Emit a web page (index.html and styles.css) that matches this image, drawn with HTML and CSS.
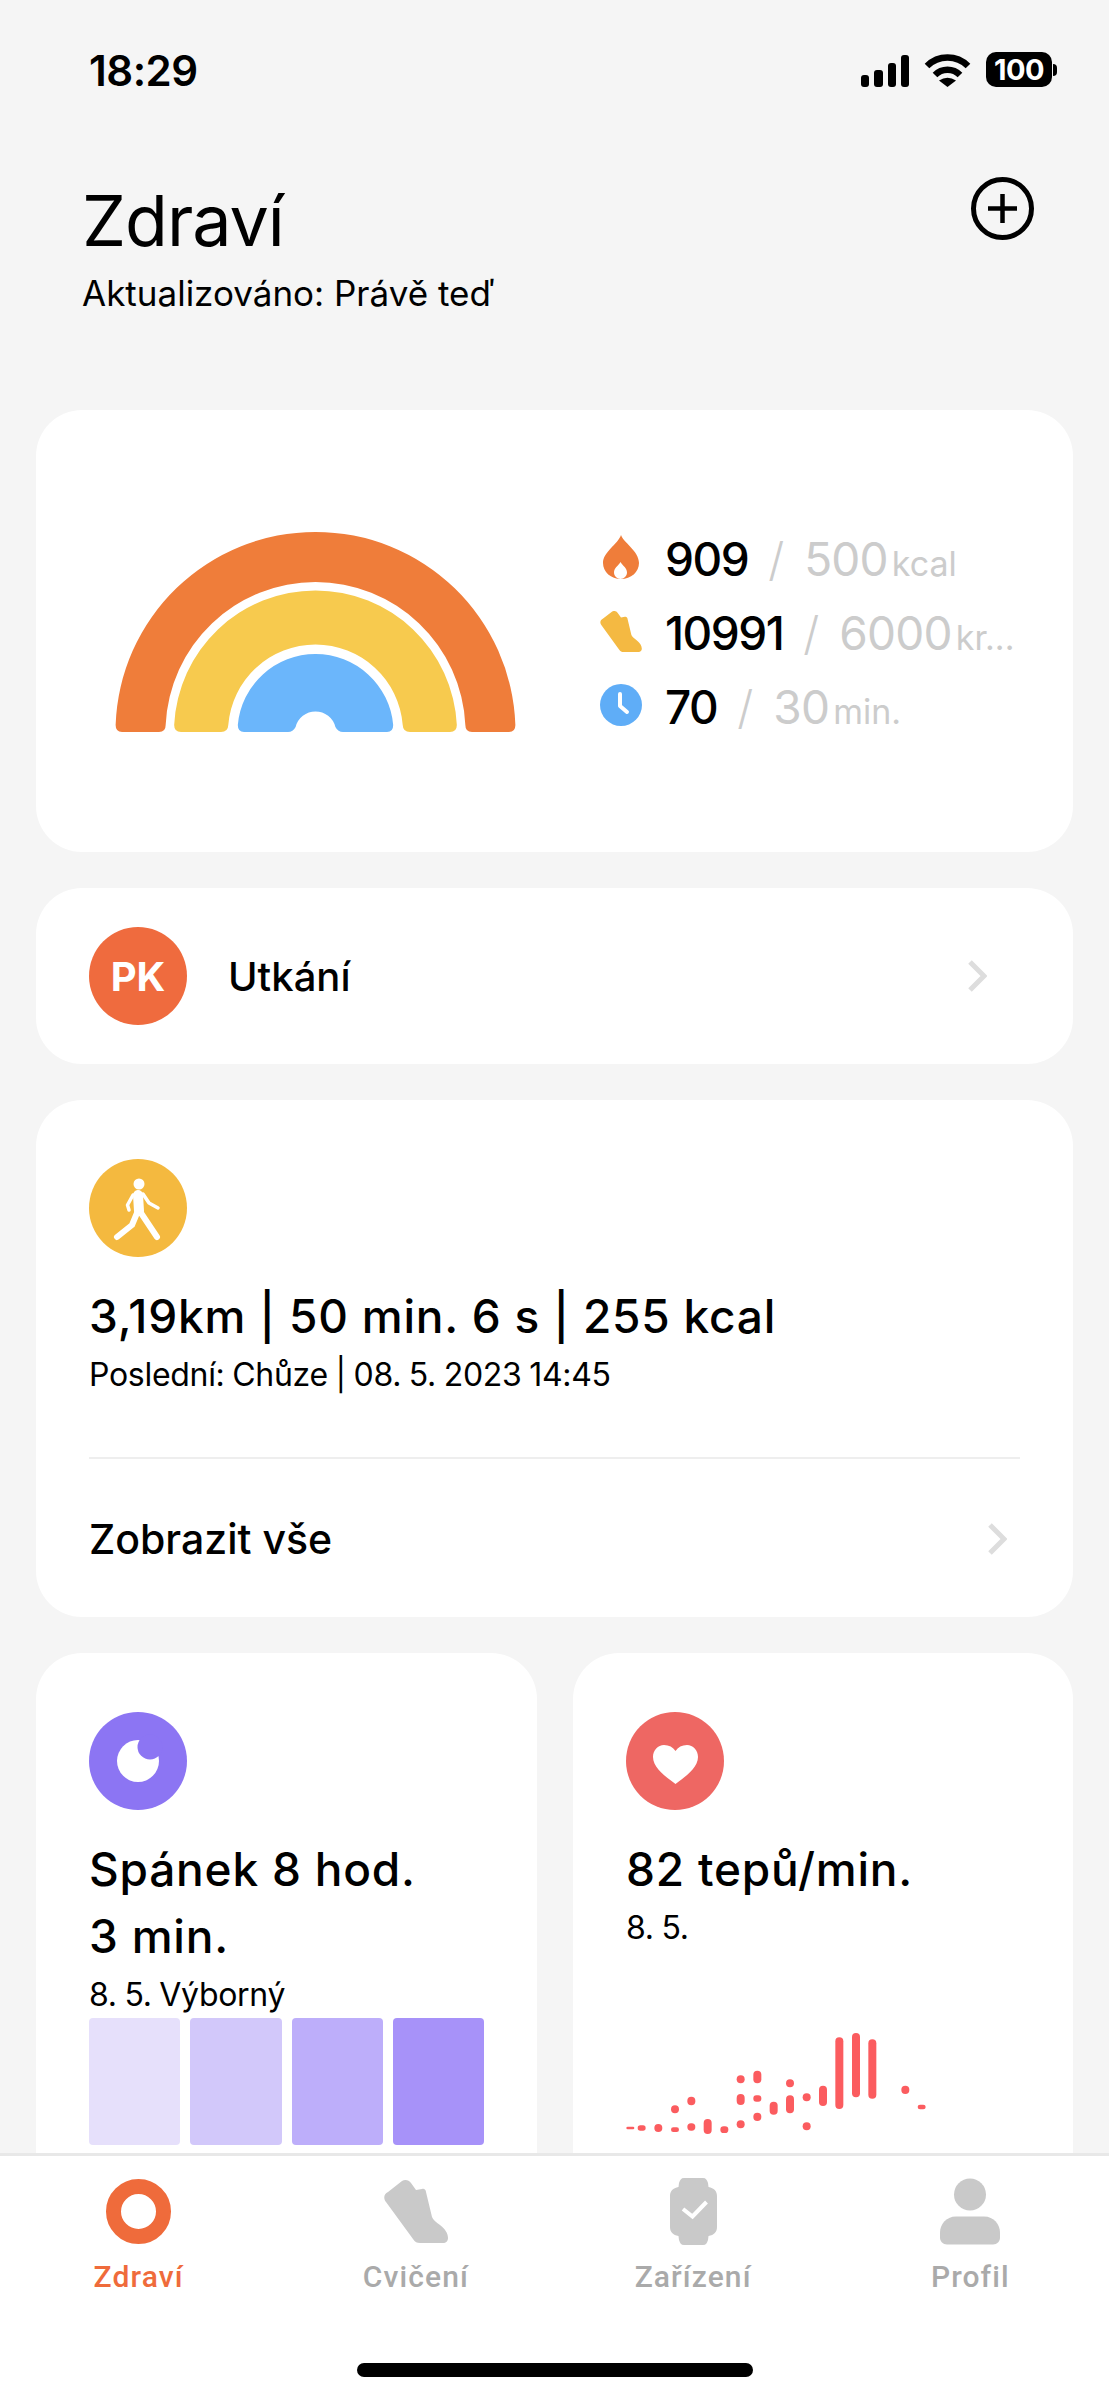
FILE: index.html
```html
<!DOCTYPE html>
<html lang="cs">
<head>
<meta charset="utf-8">
<title>Zdraví</title>
<link rel="stylesheet" href="styles.css">
</head>
<body>
<svg class="defs" width="0" height="0" aria-hidden="true">
  <symbol id="shoe" viewBox="0 0 64 63"><path d="M2 22C-1 18 0 14 4 12L18 1C21-1 25 0 27 3L32 10L38 9C40 8 42 10 42 12L48 37C49 40 52 42 56 45C61 49 64 53 64 58C64 61 62 63 59 63H36C33 63 31 62 29 59Z"/></symbol>
</svg>
<div class="app">
  <div class="status">
    <span class="time">18:29</span>
    <div class="status-icons">
      <svg class="signal" width="48" height="32" viewBox="0 0 48 32"><rect x="0" y="20" width="8" height="12" rx="3"/><rect x="13" y="15" width="9" height="17" rx="3"/><rect x="27" y="8" width="8" height="24" rx="3"/><rect x="40" y="0" width="8" height="32" rx="3"/></svg>
      <svg class="wifi" width="47" height="33" viewBox="0 0 47 33"><path class="wifi-arc" d="M3 12A29 29 0 0 1 44 12"/><path class="wifi-arc" d="M11 21A17.5 17.5 0 0 1 36 21"/><path d="M15 26.500Q23.500 21 32 26.500L23.500 33Z"/></svg>
      <div class="battery"><span class="battery-body">100</span><span class="battery-nub"></span></div>
    </div>
  </div>

  <header class="header">
    <div class="header-text">
      <h1 class="title">Zdraví</h1>
      <p class="updated">Aktualizováno: Právě teď</p>
    </div>
    <svg class="add" width="63" height="63" viewBox="0 0 63 63"><circle cx="31.500" cy="31.500" r="29" fill="none" stroke="#000" stroke-width="5"/><path d="M31.500 17V46M17 31.500H46" fill="none" stroke="#000" stroke-width="4.500"/></svg>
  </header>

  <main class="main">
    <section class="card rings">
      <svg class="rainbow" width="401" height="201" viewBox="0 0 401 201">
        <path fill="#ef7d3a" d="M0.620 194A200 200 0 0 1 400.380 194Q400.380 201 394 201H357Q350.340 201 350.340 194A150 150 0 0 0 50.660 194Q50.660 201 44 201H7Q0.620 201 0.620 194Z"/>
        <path fill="#f7ca4e" d="M59.170 194A141.500 141.500 0 0 1 341.830 194Q341.830 201 335 201H295Q288 201 287.720 194A87.500 87.500 0 0 0 113.280 194Q113 201 106 201H66Q59.170 201 59.170 194Z"/>
        <path fill="#6bb6fb" d="M122.810 194A78 78 0 0 1 278.190 194Q278.190 201 272 201H228Q223 201 220.400 196A20.500 20.500 0 0 0 180.600 196Q178 201 173 201H129Q122.810 201 122.810 194Z"/>
      </svg>
      <div class="stats">
        <div class="stat">
          <svg class="stat-icon" width="42" height="44" viewBox="0 0 42 44"><path fill="#ef7d3a" d="M21 0C23 7 39 16 39 28C39 37 31 44 21 44C11 44 3 37 3 28C3 17 18 9 21 0Z"/><path fill="#fff" d="M20.500 27C23 31 27 33 27 37.500C27 41 24 44 20.500 44C17 44 14 41 14 37.500C14 33 18 31 20.500 27Z"/></svg>
          <span class="num">909</span><span class="slash">/</span><span class="goal">500</span><span class="unit">kcal</span>
        </div>
        <div class="stat">
          <svg class="stat-icon shoe-yellow" width="42" height="41"><use href="#shoe"/></svg>
          <span class="num">10991</span><span class="slash">/</span><span class="goal">6000</span><span class="unit">kr...</span>
        </div>
        <div class="stat">
          <svg class="stat-icon" width="42" height="42" viewBox="0 0 42 42"><circle cx="21" cy="21" r="21" fill="#5fadf7"/><path d="M20 10V22L27 28" fill="none" stroke="#fff" stroke-width="4" stroke-linecap="round" stroke-linejoin="round"/></svg>
          <span class="num">70</span><span class="slash">/</span><span class="goal">30</span><span class="unit">min.</span>
        </div>
      </div>
    </section>

    <section class="card pk">
      <div class="badge badge-pk">PK</div>
      <span class="pk-label">Utkání</span>
      <svg class="chevron" width="20" height="34" viewBox="0 0 20 34"><path d="M3 3L17 17L3 31"/></svg>
    </section>

    <section class="card activity">
      <div class="badge badge-walk">
        <svg width="98" height="98" viewBox="0 0 98 98"><circle cx="50" cy="25" r="5.500" fill="#fff"/><path d="M49 36L50 52" stroke-width="10"/><path d="M44 36L38.500 46L40 51M54 35L60 44L69 49" stroke-width="3.500"/><path d="M48 54L43 66L28 78M52 54L60 66L68 78" stroke-width="6"/></svg>
      </div>
      <h2 class="metric">3,19km | 50 min. 6 s | 255 kcal</h2>
      <p class="sub">Poslední: Chůze | 08. 5. 2023 14:45</p>
      <div class="divider"></div>
      <div class="see-all">
        <span>Zobrazit vše</span>
        <svg class="chevron" width="20" height="34" viewBox="0 0 20 34"><path d="M3 3L17 17L3 31"/></svg>
      </div>
    </section>

    <div class="pair">
      <section class="card tile">
        <div class="badge badge-sleep">
          <svg width="98" height="98" viewBox="0 0 98 98"><circle cx="49" cy="49" r="21" fill="#fff"/><circle cx="61" cy="35" r="12.500" fill="#8c75f3"/></svg>
        </div>
        <h2 class="metric">Spánek 8 hod.<br>3 min.</h2>
        <p class="sub">8. 5. Výborný</p>
        <div class="sleep-bars">
          <span class="sleep-bar s1"></span><span class="sleep-bar s2"></span><span class="sleep-bar s3"></span><span class="sleep-bar s4"></span>
        </div>
      </section>
      <section class="card tile">
        <div class="badge badge-heart">
          <svg width="98" height="98" viewBox="0 0 98 98"><path fill="#fff" d="M49.500 72C40 65 27 56 27 45C27 38 32 33 38 33C43 33 47 35 49.500 39C52 35 56 33 61 33C67 33 72 38 72 45C72 56 59 65 49.500 72Z"/></svg>
        </div>
        <h2 class="metric">82 tepů/min.</h2>
        <p class="sub">8. 5.</p>
        <svg class="pulse" width="300" height="134" viewBox="78 0 900 402">
          <rect x="79" y="380" width="24" height="8" rx="4"/><rect x="113" y="376" width="24" height="16" rx="8"/><rect x="163" y="372" width="24" height="24" rx="12"/>
          <rect x="213" y="316" width="24" height="24" rx="12"/><rect x="213" y="382" width="24" height="14" rx="7"/>
          <rect x="262" y="290" width="24" height="26" rx="12"/><rect x="262" y="370" width="24" height="22" rx="11"/>
          <rect x="311" y="357" width="24" height="45" rx="12"/><rect x="361" y="379" width="24" height="20" rx="10"/>
          <rect x="410" y="226" width="24" height="24" rx="12"/><rect x="410" y="282" width="24" height="33" rx="12"/><rect x="410" y="361" width="24" height="24" rx="12"/>
          <rect x="460" y="212" width="24" height="38" rx="12"/><rect x="460" y="286" width="24" height="19" rx="9"/><rect x="460" y="338" width="24" height="25" rx="12"/>
          <rect x="509" y="305" width="24" height="39" rx="12"/>
          <rect x="558" y="238" width="24" height="24" rx="12"/><rect x="558" y="286" width="24" height="54" rx="12"/>
          <rect x="608" y="280" width="24" height="24" rx="12"/><rect x="608" y="367" width="24" height="24" rx="12"/>
          <rect x="657" y="257" width="24" height="61" rx="12"/><rect x="706" y="112" width="24" height="215" rx="12"/><rect x="756" y="99" width="24" height="193" rx="12"/><rect x="805" y="118" width="24" height="178" rx="12"/>
          <rect x="904" y="257" width="24" height="25" rx="12"/><rect x="953" y="314" width="24" height="14" rx="7"/>
        </svg>
      </section>
    </div>
  </main>

  <nav class="tabbar">
    <div class="tab tab-active">
      <svg width="65" height="65" viewBox="0 0 65 65"><circle cx="32.500" cy="32.500" r="25" fill="none" stroke="#ef6b3b" stroke-width="15"/></svg>
      <span>Zdraví</span>
    </div>
    <div class="tab">
      <svg class="tab-icon" width="64" height="65"><use href="#shoe"/></svg>
      <span>Cvičení</span>
    </div>
    <div class="tab">
      <svg class="tab-icon" width="47" height="67" viewBox="0 0 47 67"><path d="M14 0H33C36 0 37 2 38 5L38.500 9C44 10 47 13 47 18V49C47 54 44 57 38.500 58L38 62C37 65 36 67 33 67H14C11 67 10 65 9 62L8.500 58C3 57 0 54 0 49V18C0 13 3 10 8.500 9L9 5C10 2 11 0 14 0Z"/><path d="M13 31L22.500 38.500L36.500 24" fill="none" stroke="#fff" stroke-width="4"/></svg>
      <span>Zařízení</span>
    </div>
    <div class="tab">
      <svg class="tab-icon" width="60" height="66" viewBox="0 0 60 66"><ellipse cx="30" cy="16" rx="16" ry="16"/><path d="M0 54C0 46 6 38 16 38H44C54 38 60 46 60 54V59C60 63 57 66 53 66H7C3 66 0 63 0 59Z"/></svg>
      <span>Profil</span>
    </div>
    <div class="home-indicator"></div>
  </nav>
</div>
</body>
</html>
```
FILE: styles.css
```css
* { box-sizing: border-box; }
html, body { margin: 0; padding: 0; }
body { background: #f5f5f5; font-family: "Inter", "Liberation Sans", sans-serif; color: #000; }
h1, h2, p { margin: 0; font-weight: inherit; }
.defs { position: absolute; }

.app { width: 1109px; height: 2400px; display: flex; flex-direction: column; overflow: hidden; }

.status { height: 140px; flex-shrink: 0; display: flex; justify-content: space-between; align-items: flex-start; padding: 52px 52px 0 89px; }
.time { font-size: 42px; line-height: 38px; font-weight: 600; letter-spacing: -0.5px; }
.status-icons { display: flex; align-items: flex-end; gap: 15px; height: 35px; }
.signal, .wifi { fill: #000; display: block; }
.wifi-arc { fill: none; stroke: #000; stroke-width: 6.5; }
.battery { display: flex; align-items: center; gap: 1px; }
.battery-body { width: 66px; height: 35px; border-radius: 10px; background: #000; color: #fff; font-size: 29px; font-weight: 700; line-height: 35px; text-align: center; letter-spacing: -0.5px; }
.battery-nub { width: 4px; height: 12px; background: #000; border-radius: 0 6px 6px 0; }

.header { height: 270px; flex-shrink: 0; display: flex; justify-content: space-between; align-items: flex-start; padding: 37px 75px 0 82px; }
.title { font-size: 70px; line-height: 84px; font-weight: 400; letter-spacing: -1px; margin-top: 2px; }
.updated { font-size: 35px; line-height: 44px; margin-top: 8px; }

.main { flex: 1; min-height: 0; overflow: hidden; padding: 0 36px; display: flex; flex-direction: column; gap: 36px; }
.card { background: #fff; border-radius: 46px; flex-shrink: 0; }

.rings { height: 442px; display: flex; align-items: center; gap: 84px; padding-left: 79px; }
.rainbow { display: block; }
.stats { display: flex; flex-direction: column; }
.stat { height: 74px; display: flex; align-items: baseline; }
.stat-icon { flex-shrink: 0; align-self: center; margin-right: 23px; display: block; }
.shoe-yellow { fill: #f4b942; }
.num { font-size: 46px; line-height: 78px; font-weight: 500; letter-spacing: -1.5px; }
.slash { font-size: 46px; font-weight: 300; color: #ccc; margin: 0 20px; }
.goal { font-size: 46px; font-weight: 400; letter-spacing: -0.8px; color: #ccc; }
.unit { font-size: 34px; font-weight: 400; color: #ccc; margin-left: 4px; }

.pk { height: 176px; display: flex; align-items: center; padding: 0 86px 0 53px; }
.badge { width: 98px; height: 98px; border-radius: 50%; flex-shrink: 0; display: flex; align-items: center; justify-content: center; }
.badge svg { display: block; fill: none; stroke: #fff; stroke-linecap: round; stroke-linejoin: round; }
.badge-sleep svg, .badge-heart svg { stroke: none; }
.badge-walk svg circle { stroke: none; }
.badge-pk { background: #ef6b3e; color: #fff; font-size: 40px; font-weight: 700; }
.badge-walk { background: #f4b93f; }
.badge-sleep { background: #8c75f3; }
.badge-heart { background: #ee6763; }
.pk-label { margin-left: 41px; font-size: 40px; font-weight: 500; flex: 1; }
.chevron { display: block; flex-shrink: 0; fill: none; stroke: #ddd; stroke-width: 5; }

.activity { height: 517px; padding: 59px 53px 0; }
.metric { font-size: 46px; line-height: 67px; font-weight: 450; letter-spacing: 0.8px; }
.activity .metric { margin-top: 26px; }
.sub { font-size: 32px; line-height: 42px; letter-spacing: -0.3px; margin-top: 4px; word-spacing: -1px; }
.divider { height: 2px; background: #eee; margin-top: 61px; }
.see-all { height: 160px; display: flex; align-items: center; justify-content: space-between; padding-right: 13px; font-size: 41px; font-weight: 450; }

.pair { display: grid; grid-template-columns: 1fr 1fr; gap: 36px; flex-shrink: 0; }
.tile { height: 600px; padding: 59px 53px 0; }
.tile .metric { margin-top: 26px; }
.sleep-bars { display: grid; grid-template-columns: repeat(4, 1fr); gap: 10px; height: 127px; width: 395px; margin-top: 2px; }
.sleep-bar { border-radius: 4px; }
.s1 { background: #e6e0fb; }
.s2 { background: #d2c8fa; }
.s3 { background: #bdaefa; }
.s4 { background: #a792f9; }
.pulse { display: block; fill: #fb5c5f; margin-top: 51px; }

.tabbar { height: 247px; flex-shrink: 0; background: #fff; border-top: 3px solid #e8e8e8; display: grid; grid-template-columns: repeat(4, 1fr); position: relative; }
.tab { display: flex; flex-direction: column; align-items: center; padding-top: 22px; height: 160px; font-family: "Roboto", "Inter", sans-serif; font-size: 30px; font-weight: 500; letter-spacing: 1.1px; color: #aaa; }
.tab svg { display: block; height: 67px; }
.tab span { margin-top: 15px; line-height: 34px; }
.tab-active { color: #ef6b3b; }
.tab-icon { fill: #c9c9c9; }
.home-indicator { position: absolute; left: 357px; bottom: 23px; width: 396px; height: 14px; border-radius: 7px; background: #000; }
```
